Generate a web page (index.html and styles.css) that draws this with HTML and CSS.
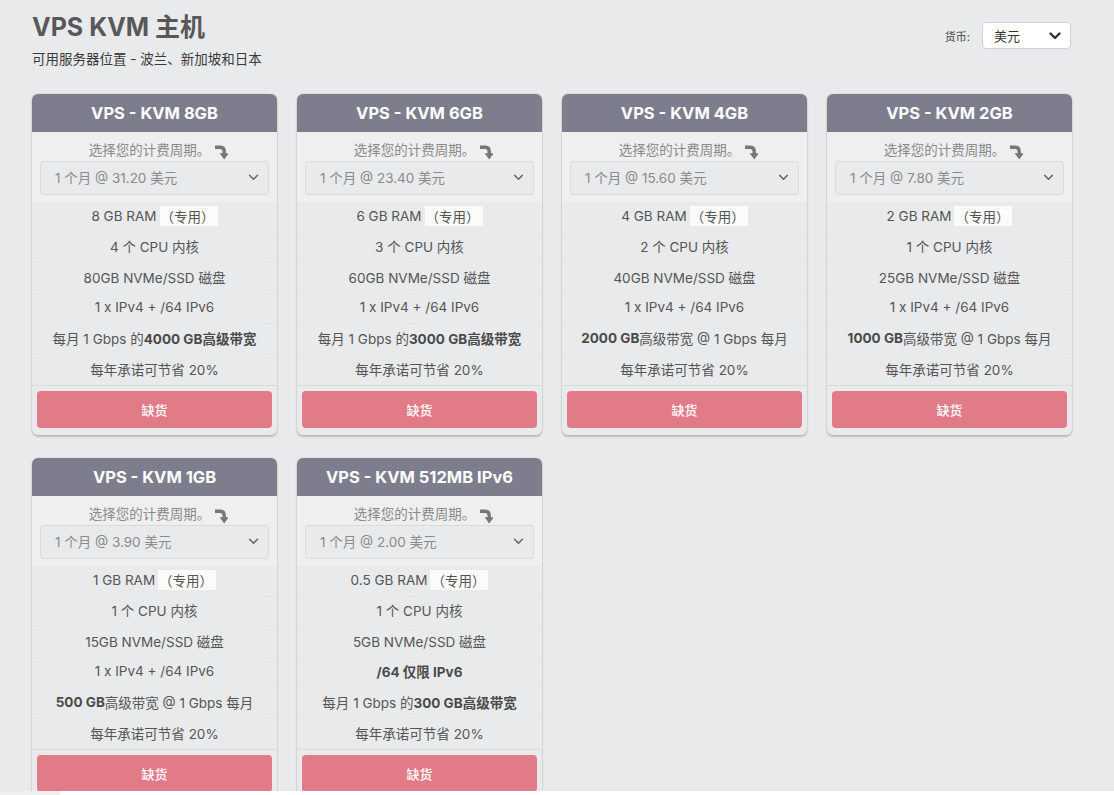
FILE: index.html
```html
<!DOCTYPE html>
<html lang="zh">
<head>
<meta charset="utf-8">
<title>VPS KVM 主机</title>
<link rel="stylesheet" href="styles.css">
</head>
<body>
<div class="page">
  <header class="top">
    <div class="titles">
      <h1 class="title">VPS KVM 主机</h1>
      <p class="subtitle">可用服务器位置 - 波兰、新加坡和日本</p>
    </div>
    <div class="currency">
      <span class="currency-label">货币:</span>
      <div class="currency-select">
        <span>美元</span>
        <svg class="chev-dark" viewBox="0 0 12 8" width="12" height="8"><path d="M1.5 1.5 L6 6 L10.5 1.5" fill="none" stroke="#333" stroke-width="2.4" stroke-linecap="round" stroke-linejoin="round"/></svg>
      </div>
    </div>
  </header>

  <div class="grid">
    <div class="card">
      <div class="card-head">VPS - KVM 8GB</div>
      <div class="cycle">
        <div class="cycle-label">选择您的计费周期。<svg class="arrow" viewBox="0 0 14 16" width="14" height="16"><path d="M1 3.2 H6.5 C9.2 3.2 10.2 5 10.2 7.5 V10" fill="none" stroke="#777" stroke-width="3.4"/><path d="M5.6 9.2 H14.8 L10.2 15.4 Z" fill="#777"/></svg></div>
        <div class="cycle-select"><span>1 个月 @ 31.20 美元</span><svg viewBox="0 0 12 8" width="11" height="7"><path d="M1.5 1.5 L6 6 L10.5 1.5" fill="none" stroke="#666" stroke-width="1.8" stroke-linecap="round" stroke-linejoin="round"/></svg></div>
      </div>
      <ul class="features">
        <li>8 GB RAM <span class="tag">（专用）</span></li>
        <li>4 个 CPU 内核</li>
        <li>80GB NVMe/SSD 磁盘</li>
        <li>1 x IPv4 + /64 IPv6</li>
        <li>每月 1 Gbps 的<b>4000 GB高级带宽</b></li>
        <li>每年承诺可节省 20%</li>
      </ul>
      <div class="foot"><div class="btn">缺货</div></div>
    </div>

    <div class="card">
      <div class="card-head">VPS - KVM 6GB</div>
      <div class="cycle">
        <div class="cycle-label">选择您的计费周期。<svg class="arrow" viewBox="0 0 14 16" width="14" height="16"><path d="M1 3.2 H6.5 C9.2 3.2 10.2 5 10.2 7.5 V10" fill="none" stroke="#777" stroke-width="3.4"/><path d="M5.6 9.2 H14.8 L10.2 15.4 Z" fill="#777"/></svg></div>
        <div class="cycle-select"><span>1 个月 @ 23.40 美元</span><svg viewBox="0 0 12 8" width="11" height="7"><path d="M1.5 1.5 L6 6 L10.5 1.5" fill="none" stroke="#666" stroke-width="1.8" stroke-linecap="round" stroke-linejoin="round"/></svg></div>
      </div>
      <ul class="features">
        <li>6 GB RAM <span class="tag">（专用）</span></li>
        <li>3 个 CPU 内核</li>
        <li>60GB NVMe/SSD 磁盘</li>
        <li>1 x IPv4 + /64 IPv6</li>
        <li>每月 1 Gbps 的<b>3000 GB高级带宽</b></li>
        <li>每年承诺可节省 20%</li>
      </ul>
      <div class="foot"><div class="btn">缺货</div></div>
    </div>

    <div class="card">
      <div class="card-head">VPS - KVM 4GB</div>
      <div class="cycle">
        <div class="cycle-label">选择您的计费周期。<svg class="arrow" viewBox="0 0 14 16" width="14" height="16"><path d="M1 3.2 H6.5 C9.2 3.2 10.2 5 10.2 7.5 V10" fill="none" stroke="#777" stroke-width="3.4"/><path d="M5.6 9.2 H14.8 L10.2 15.4 Z" fill="#777"/></svg></div>
        <div class="cycle-select"><span>1 个月 @ 15.60 美元</span><svg viewBox="0 0 12 8" width="11" height="7"><path d="M1.5 1.5 L6 6 L10.5 1.5" fill="none" stroke="#666" stroke-width="1.8" stroke-linecap="round" stroke-linejoin="round"/></svg></div>
      </div>
      <ul class="features">
        <li>4 GB RAM <span class="tag">（专用）</span></li>
        <li>2 个 CPU 内核</li>
        <li>40GB NVMe/SSD 磁盘</li>
        <li>1 x IPv4 + /64 IPv6</li>
        <li><b>2000 GB</b>高级带宽 @ 1 Gbps 每月</li>
        <li>每年承诺可节省 20%</li>
      </ul>
      <div class="foot"><div class="btn">缺货</div></div>
    </div>

    <div class="card">
      <div class="card-head">VPS - KVM 2GB</div>
      <div class="cycle">
        <div class="cycle-label">选择您的计费周期。<svg class="arrow" viewBox="0 0 14 16" width="14" height="16"><path d="M1 3.2 H6.5 C9.2 3.2 10.2 5 10.2 7.5 V10" fill="none" stroke="#777" stroke-width="3.4"/><path d="M5.6 9.2 H14.8 L10.2 15.4 Z" fill="#777"/></svg></div>
        <div class="cycle-select"><span>1 个月 @ 7.80 美元</span><svg viewBox="0 0 12 8" width="11" height="7"><path d="M1.5 1.5 L6 6 L10.5 1.5" fill="none" stroke="#666" stroke-width="1.8" stroke-linecap="round" stroke-linejoin="round"/></svg></div>
      </div>
      <ul class="features">
        <li>2 GB RAM <span class="tag">（专用）</span></li>
        <li>1 个 CPU 内核</li>
        <li>25GB NVMe/SSD 磁盘</li>
        <li>1 x IPv4 + /64 IPv6</li>
        <li><b>1000 GB</b>高级带宽 @ 1 Gbps 每月</li>
        <li>每年承诺可节省 20%</li>
      </ul>
      <div class="foot"><div class="btn">缺货</div></div>
    </div>

    <div class="card">
      <div class="card-head">VPS - KVM 1GB</div>
      <div class="cycle">
        <div class="cycle-label">选择您的计费周期。<svg class="arrow" viewBox="0 0 14 16" width="14" height="16"><path d="M1 3.2 H6.5 C9.2 3.2 10.2 5 10.2 7.5 V10" fill="none" stroke="#777" stroke-width="3.4"/><path d="M5.6 9.2 H14.8 L10.2 15.4 Z" fill="#777"/></svg></div>
        <div class="cycle-select"><span>1 个月 @ 3.90 美元</span><svg viewBox="0 0 12 8" width="11" height="7"><path d="M1.5 1.5 L6 6 L10.5 1.5" fill="none" stroke="#666" stroke-width="1.8" stroke-linecap="round" stroke-linejoin="round"/></svg></div>
      </div>
      <ul class="features">
        <li>1 GB RAM <span class="tag">（专用）</span></li>
        <li>1 个 CPU 内核</li>
        <li>15GB NVMe/SSD 磁盘</li>
        <li>1 x IPv4 + /64 IPv6</li>
        <li><b>500 GB</b>高级带宽 @ 1 Gbps 每月</li>
        <li>每年承诺可节省 20%</li>
      </ul>
      <div class="foot"><div class="btn">缺货</div></div>
    </div>

    <div class="card">
      <div class="card-head">VPS - KVM 512MB IPv6</div>
      <div class="cycle">
        <div class="cycle-label">选择您的计费周期。<svg class="arrow" viewBox="0 0 14 16" width="14" height="16"><path d="M1 3.2 H6.5 C9.2 3.2 10.2 5 10.2 7.5 V10" fill="none" stroke="#777" stroke-width="3.4"/><path d="M5.6 9.2 H14.8 L10.2 15.4 Z" fill="#777"/></svg></div>
        <div class="cycle-select"><span>1 个月 @ 2.00 美元</span><svg viewBox="0 0 12 8" width="11" height="7"><path d="M1.5 1.5 L6 6 L10.5 1.5" fill="none" stroke="#666" stroke-width="1.8" stroke-linecap="round" stroke-linejoin="round"/></svg></div>
      </div>
      <ul class="features">
        <li>0.5 GB RAM <span class="tag">（专用）</span></li>
        <li>1 个 CPU 内核</li>
        <li>5GB NVMe/SSD 磁盘</li>
        <li><b>/64 仅限 IPv6</b></li>
        <li>每月 1 Gbps 的<b>300 GB高级带宽</b></li>
        <li>每年承诺可节省 20%</li>
      </ul>
      <div class="foot"><div class="btn">缺货</div></div>
    </div>
  </div>
</div>
<div class="bottom-bar"><div class="bottom-thumb"></div></div>
</body>
</html>
```

FILE: styles.css
```css
* { box-sizing: border-box; }
html, body { margin: 0; padding: 0; }
body {
  background: #e9eaec;
  font-family: Inter, "Noto Sans CJK SC", "Noto Sans", sans-serif;
  color: #555;
}
.page {
  padding: 10px 43px 40px 32px;
}
.top {
  display: flex;
  justify-content: space-between;
  align-items: flex-start;
  height: 84px;
}
.title {
  margin: 0;
  font-size: 25px;
  line-height: 34px;
  font-weight: 700;
  color: #58585a;
}
.subtitle {
  margin: 6px 0 0;
  font-size: 13.5px;
  line-height: 18px;
  color: #3a3a3a;
}
.currency {
  display: flex;
  align-items: center;
  gap: 12px;
  margin-top: 12px;
}
.currency-label {
  font-size: 11px;
  color: #444;
}
.currency-select {
  width: 89px;
  height: 27px;
  background: #fff;
  border: 1px solid #cfd3d8;
  border-radius: 4px;
  display: flex;
  align-items: center;
  justify-content: space-between;
  padding: 0 9px 0 11px;
  font-size: 13px;
  color: #333;
}
.grid {
  display: grid;
  grid-template-columns: repeat(4, 245px);
  column-gap: 20px;
  row-gap: 23px;
}
.card {
  background: #e9eaec;
  border-radius: 6px;
  box-shadow: 0 2px 2px rgba(0,0,0,0.18), 0 0 0 1px #e0e0e2;
  overflow: hidden;
}
.card-head {
  height: 38px;
  background: #7d7d8d;
  color: #fff;
  font-weight: 700;
  font-size: 16.5px;
  display: flex;
  align-items: center;
  justify-content: center;
}
.cycle {
  background: #efeff0;
  padding: 9px 8px 7px;
  text-align: center;
}
.cycle-label {
  font-size: 13.5px;
  line-height: 17px;
  color: #8a8a8a;
  display: flex;
  align-items: center;
  justify-content: center;
  gap: 4px;
  margin-left: 8px;
}
.arrow { margin-top: 3px; }
.cycle-select {
  margin-top: 1px;
  height: 34px;
  border: 1px solid #d9dadd;
  border-radius: 4px;
  background: #e9eaec;
  display: flex;
  align-items: center;
  justify-content: space-between;
  padding: 0 9px 2px 14px;
  font-size: 13.5px;
  color: #8a8a8a;
}
.features {
  list-style: none;
  margin: 0;
  padding: 0;
}
.features li {
  height: 30.5px;
  display: flex;
  align-items: center;
  justify-content: center;
  padding-bottom: 2px;
  font-size: 13.5px;
  color: #555;
  border-bottom: 1px dashed #e5e6e8;
  white-space: nowrap;
}
.features li:last-child { border-bottom: none; }
.features b { font-weight: 700; color: #4a4a4a; }
.tag {
  background: #fbfbfb;
  padding: 0 3px 0 1px;
  margin-left: 3px;
}
.foot {
  border-top: 1px solid #d8d9db;
  padding: 5px 5px 7px;
}
.btn {
  height: 37px;
  background: #e07b87;
  border-radius: 4px;
  color: #fff;
  font-size: 13px;
  font-weight: 500;
  display: flex;
  align-items: center;
  justify-content: center;
}
.bottom-bar {
  position: fixed;
  left: 0;
  right: 0;
  bottom: 0;
  height: 4px;
  background: #fff;
}
.bottom-thumb {
  width: 60px;
  height: 100%;
  background: #eeeff0;
}
```
